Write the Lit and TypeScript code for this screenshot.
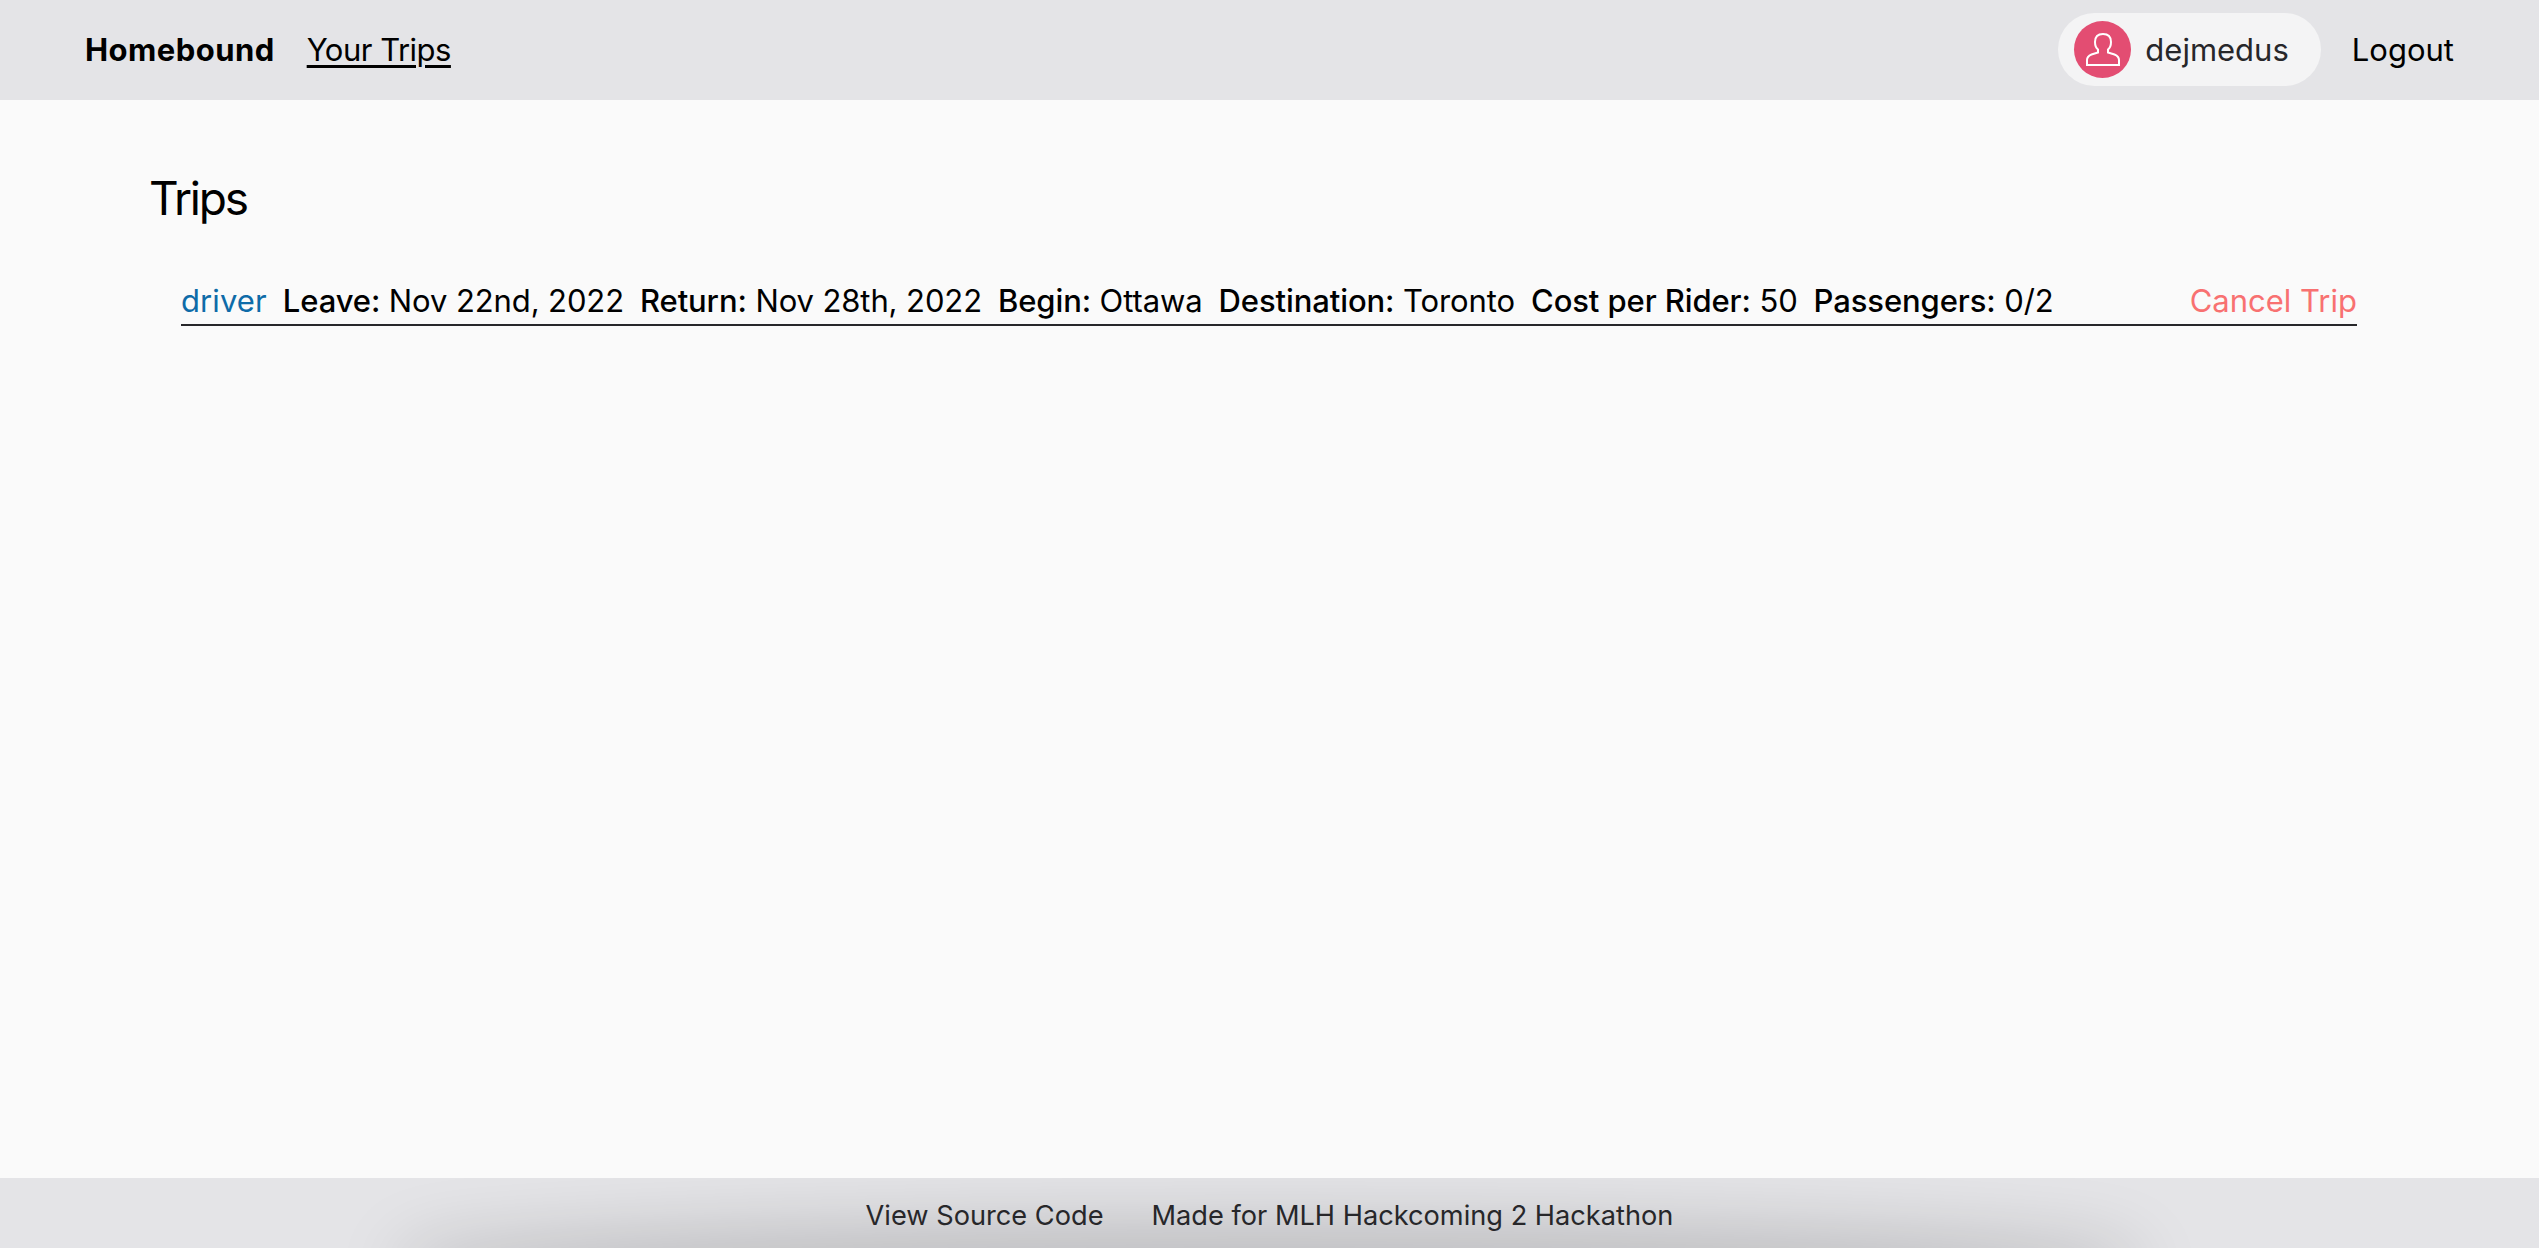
import { LitElement, html, css } from "lit";
import { customElement } from "lit/decorators.js";

@customElement("app-root")
export class AppRoot extends LitElement {
  static styles = css`
    :host { display: flex; flex-direction: column; height: 1248px; overflow: hidden; background: #fafafa; color: #000; font-family: Inter, "Liberation Sans", sans-serif; font-size: 31px; }
    a { color: inherit; text-decoration: none; }
    .nav { height: 100px; flex: none; background: #e4e4e7; display: flex; align-items: center; justify-content: space-between; padding: 0 85px 2px 85px; box-sizing: border-box; }
    .left, .right { display: flex; align-items: center; }
    .brand { font-weight: 700; letter-spacing: .45px; margin-right: 32px; }
    .link { letter-spacing: -.5px; text-decoration: underline; text-decoration-thickness: 2.5px; text-underline-offset: 4px; }
    .user { display: flex; align-items: center; height: 73px; padding: 0 32px 0 16px; border-radius: 37px; background: #f4f4f5; color: #27272a; margin-right: 31px; gap: 14px; }
    .avatar { width: 57px; height: 57px; border-radius: 50%; background: #e34d72; display: flex; align-items: center; justify-content: center; }
    .avatar svg { width: 34px; height: 33px; fill: none; stroke: #fff; stroke-width: 2; }
    main { flex: 1; padding: 0 182px 0 149px; }
    h1 { margin: 0; padding-top: 66px; font-size: 46px; font-weight: 400; line-height: 64px; letter-spacing: -2.2px; }
    .row { display: flex; margin: 46px 0 0 32px; border-bottom: 2px solid #27272a; height: 48px; align-items: center; gap: 16px; white-space: nowrap; letter-spacing: -.1px; }
    .role { color: #0e6ba8; letter-spacing: .1px; }
    b { font-weight: 500; }
    .cancel { margin-left: auto; color: #f87171; letter-spacing: 0; }
    .footer { position: relative; height: 70px; flex: none; overflow: hidden; background: #e4e4e7; color: #27272a; font-size: 27.2px; display: flex; justify-content: center; align-items: center; gap: 48px; padding-top: 4px; box-sizing: border-box; }
    .footer::before { content: ""; position: absolute; left: 430px; right: 430px; top: 78px; height: 24px; border-radius: 50%; box-shadow: 0 0 70px 32px rgba(0,0,0,.18); }
    .footer a { position: relative; }
  `;
  render() {
    return html`
      <nav class="nav">
        <div class="left"><a class="brand">Homebound</a><a class="link">Your Trips</a></div>
        <div class="right">
          <div class="user">
            <span class="avatar"><svg viewBox="0 0 34 33"><path d="M1 32V27C1 24 3 22.500 5.500 21.500L12 19.500V16.500C10 15 9 12 9 9C9 4 12 1 17 1C22 1 25 4 25 9C25 12 24 15 22 16.500V19.500L28.500 21.500C31 22.500 33 24 33 27V32Z"/></svg></span>
            <span>dejmedus</span>
          </div>
          <a>Logout</a>
        </div>
      </nav>
      <main>
        <h1>Trips</h1>
        <div class="row">
          <span class="role">driver</span>
          <span><b>Leave:</b> Nov 22nd, 2022</span>
          <span><b>Return:</b> Nov 28th, 2022</span>
          <span><b>Begin:</b> Ottawa</span>
          <span><b>Destination:</b> Toronto</span>
          <span><b>Cost per Rider:</b> 50</span>
          <span><b>Passengers:</b> 0/2</span>
          <a class="cancel">Cancel Trip</a>
        </div>
      </main>
      <footer class="footer"><a>View Source Code</a><a>Made for MLH Hackcoming 2 Hackathon</a></footer>
    `;
  }
}
